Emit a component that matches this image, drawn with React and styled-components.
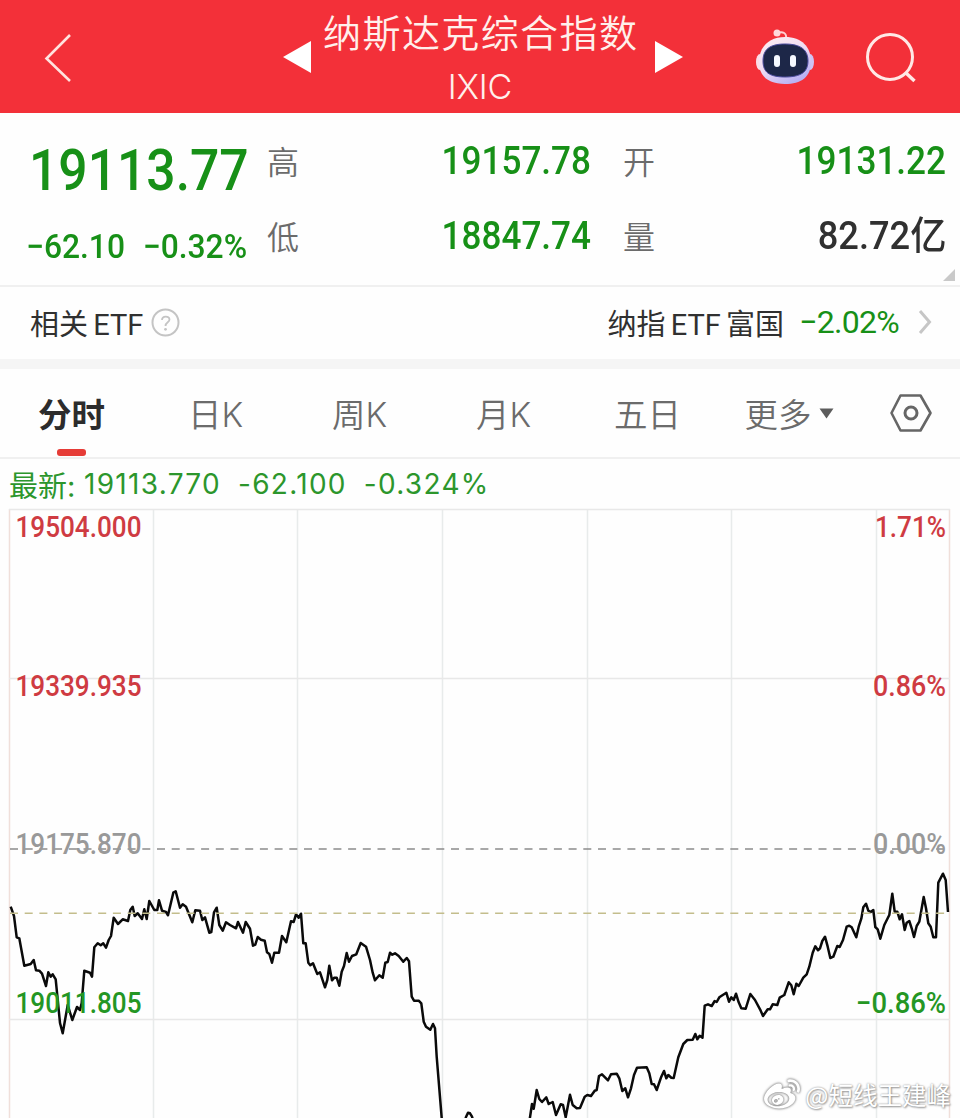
import React from 'react';
import styled, { createGlobalStyle } from 'styled-components';
import { FaWeibo } from 'react-icons/fa';

const GREEN = '#179017';
const RED = '#cf3b42';

const GlobalStyle = createGlobalStyle`
  * {
    box-sizing: border-box;
  }

  body {
    margin: 0;
    background: #fefefe;
    font-family: Roboto, 'Noto Sans CJK SC', sans-serif;
    overflow: hidden;
  }
`;

const Page = styled.div`
  position: relative;
  width: 960px;
  height: 1118px;
  overflow: hidden;
  background: #fefefe;
`;

const Header = styled.header`
  display: flex;
  align-items: center;
  height: 113px;
  padding: 0 42px 0 42px;
  background: #f33039;
  color: #fff0ec;

  svg {
    display: block;
    flex: none;
  }
`;

const BackIcon = styled.svg`
  margin-top: 3px;
`;

const Switcher = styled.div`
  display: flex;
  align-items: center;
  justify-content: space-between;
  width: 400px;
  margin-left: 209px;
`;

const Title = styled.div`
  height: 113px;
  padding-right: 6px;
  text-align: center;
  white-space: nowrap;
`;

const IndexName = styled.div`
  height: 66px;
  font-family: 'Noto Sans CJK SC', sans-serif;
  font-weight: 350;
  font-size: 38px;
  line-height: 62px;
  letter-spacing: 1.4px;
  margin-right: -1.4px;
`;

const IndexCode = styled.div`
  font-family: Inter, sans-serif;
  font-weight: 300;
  font-size: 34px;
  line-height: 42px;
  letter-spacing: -0.2px;
`;

const HeaderIcons = styled.div`
  display: flex;
  align-items: center;
  gap: 50px;
  margin-left: 72px;
`;

const Quote = styled.section`
  position: relative;
  display: flex;
  height: 174px;
  border-bottom: 2px solid #f0f0f0;
`;

const Current = styled.div`
  width: 267px;
  padding: 22px 0 0 29px;
  color: ${GREEN};
  white-space: nowrap;
`;

const Price = styled.div`
  font-weight: 500;
  font-size: 58px;
  line-height: 70px;
  transform: scaleX(0.89);
  transform-origin: left;
`;

const Change = styled.div`
  display: flex;
  gap: 19px;
  margin-top: 21px;
  margin-left: -3px;
  font-weight: 500;
  font-size: 34px;
  line-height: 40px;
  transform: scaleX(0.935);
  transform-origin: left;
`;

const Stats = styled.div`
  display: grid;
  grid-template-columns: 324px 323px;
  grid-template-rows: 75px 75px;
  column-gap: 32px;
  padding-top: 11px;
`;

const Stat = styled.div`
  display: flex;
  align-items: center;
  justify-content: space-between;
`;

const StatLabel = styled.span`
  margin-bottom: 4px;
  color: #6b6b6b;
  font-family: 'Noto Sans CJK SC', sans-serif;
  font-weight: 350;
  font-size: 32px;
  line-height: 40px;
`;

const StatValue = styled.span`
  margin-bottom: 1px;
  color: ${({ $dark }) => ($dark ? '#303030' : GREEN)};
  font-weight: 500;
  font-size: 39px;
  line-height: 44px;
  transform: scaleX(${({ $dark }) => ($dark ? 0.93 : 0.9)});
  transform-origin: right;
`;

const Corner = styled.i`
  position: absolute;
  right: 5px;
  bottom: 4px;
  border-left: 12px solid transparent;
  border-bottom: 12px solid #c9c9c9;
`;

const EtfRow = styled.section`
  display: flex;
  align-items: center;
  height: 82px;
  padding: 0 28px 2px 30px;
  border-bottom: 10px solid #f5f5f5;
  color: #303030;
  font-size: 29px;
  white-space: nowrap;
`;

const EtfText = styled.span`
  margin-left: ${({ $push }) => ($push ? 'auto' : 0)};
  margin-right: ${({ $push }) => ($push ? '15px' : '8px')};
  word-spacing: -2px;
`;

const EtfChange = styled.span`
  margin-right: 19px;
  color: ${GREEN};
  font-size: 32px;
  letter-spacing: -0.7px;
`;

const Tabs = styled.nav`
  display: grid;
  grid-template-columns: repeat(6, 144px) 96px;
  height: 90px;
  border-bottom: 2px solid #f0f0f0;
`;

const Tab = styled.div`
  position: relative;
  display: flex;
  align-items: center;
  justify-content: center;
  gap: 7px;
  padding-right: ${({ $shift }) => $shift || 1}px;
  color: ${({ $active }) => ($active ? '#2c2c2c' : '#6b6b6b')};
  font-family: Inter, 'Noto Sans CJK SC', sans-serif;
  font-weight: ${({ $active }) => ($active ? 700 : 350)};
  font-size: 33.5px;
  line-height: 84px;

  &::after {
    content: '';
    position: absolute;
    left: 57px;
    bottom: 1px;
    width: 29px;
    height: 7px;
    border-radius: 3px;
    background: ${({ $active }) => ($active ? '#e63c37' : 'transparent')};
  }
`;

const TabName = styled.span`
  padding-top: 4px;
`;

const Latest = styled.div`
  display: flex;
  align-items: center;
  height: 49px;
  padding: 1px 0 0 9px;
  color: #2c962c;
  font-family: Inter, 'Noto Sans CJK SC', sans-serif;
  font-size: 28px;
  white-space: pre;
`;

const LatestLabel = styled.span`
  width: 75px;
  font-size: 29px;
`;

const LatestValue = styled.span`
  margin-right: 17px;
  letter-spacing: 1.3px;
`;

const Chart = styled.svg`
  display: block;
  width: 960px;
  height: 610px;
`;

const Watermark = styled.div`
  position: absolute;
  right: 9px;
  bottom: 5px;
  display: flex;
  align-items: center;
  gap: 5px;
  color: #fff;
  font-family: 'Noto Sans CJK SC', sans-serif;
  font-size: 24.5px;
  line-height: 34px;
  text-shadow: 0 0 2px #8a8a8a, 1px 1px 2px #999;

  svg {
    filter: drop-shadow(0 0 1px #888) drop-shadow(0 0 1px #aaa);
  }
`;

const stats = [
  { label: '高', value: '19157.78' },
  { label: '开', value: '19131.22' },
  { label: '低', value: '18847.74' },
  { label: '量', value: '82.72亿', dark: true },
];

const tabs = ['分时', '日K', '周K', '月K', '五日'];

const gridX = [9.5, 153.5, 297.5, 442.5, 587.5, 731.5, 876.5, 949.5];
const gridY = [509.5, 678.5, 1019.5];

const axis = [
  { y: 537, price: '19504.000', pct: '1.71%', w: 71, color: RED },
  { y: 695.5, price: '19339.935', pct: '0.86%', w: 73, color: RED },
  { y: 854, price: '19175.870', pct: '0.00%', w: 73, color: '#999' },
  { y: 1012.5, price: '19011.805', pct: '−0.86%', w: 90, color: '#249624' },
];

const line = `
  10.7,906.7 14,916 16.7,937.3 19.3,938.3 24.3,965.7 30.7,964 33.7,960 36,970.3 39.3,970.7 42,973.7
  46,986 48.3,972.3 50.7,976.7 52.7,974.3 55.7,979.3 60,1023 62.7,1033.3 67.7,1005 72.3,1020 77,1007
  80,1010 81.7,1003 84.3,970.7 90,972.7 92,976.7 94.3,947.3 97.7,943.3 100.7,945.3 103.3,943.3 106,947.7
  108.7,940 111,936 113.7,917.7 118,924 122.7,919.3 128,921 130.3,910 132.7,906.7 134.7,916 137.7,913.3
  142,919 144.3,909.3 146.7,919 149.3,901 154.3,910 157.3,910 159,900.3 162,910.7 166,912 168,915.3
  173.3,892.7 175.7,891.3 180,907.7 182.7,904.3 186,906.7 192.3,922.3 195.3,910.3 200,910.7 202.3,920
  205,917.3 209.3,932.7 211.3,932 214,912.3 216.7,907.7 219.3,925 222.7,930.7 226,922.3 230,925
  236,928.3 238,922 243,932.7 245.7,922 250,928.7 253,945.7 255.3,944.7 257.7,937 261,939.7 264.7,940.7
  267,952.3 269.3,954 272,962.7 274.3,952.7 279,952.7 282,936 286.3,942.3 291,921.3 293.7,922 296,914.3
  298.7,917.7 301,913.7 303.3,943.3 305.7,943.3 308.3,962.7 310.3,965.3 313,963.3 317.3,974 320,972.3
  325,987.3 327.3,980 329.3,965.7 332,980.3 334.3,977.7 336.7,977.7 339.3,985.7 341.7,971.7 344,966
  346.7,953 349,961.7 352,956 356.3,954.3 360.7,943 366,946.7 370,960 372.7,972.7 375,980.3 379.3,975.3
  382.7,977.7 385.3,962.7 387.7,962 390,952.7 392.3,954.7 395,953.3 398.7,956 403.3,961.7 406.7,958
  409,961.3 411.7,996.7 414,1000.7 418.7,1000.7 421.3,1003.3 423.7,1021.7 426,1026.7 430.3,1029.7
  433,1024 435,1028.3 436.7,1056.7 441.7,1118 444,1145 462,1130 466,1117 468,1112.7 470,1113.3
  472,1116.7 476,1130 528,1130 530,1117.3 532,1104 533.7,1108.7 536.7,1090 539.3,1099 542,1102
  546.3,1097.3 548.7,1104 552.7,1102 556,1115 560.7,1104.3 563,1105 565.7,1117.3 570,1094.7 572.7,1105
  576.7,1108.3 580,1108 584.7,1096.7 587.3,1095 591,1096 594.7,1090.7 596.7,1090 599,1076 602,1074.3
  608,1080.3 611,1074.3 616.7,1073.7 619.3,1078.3 622.3,1091 625.3,1088.3 628,1097.3 631,1088.3
  634,1075 637,1067.7 646.7,1067.3 649.3,1073.3 651.7,1084 654,1084.3 656.7,1090 661.3,1076.7 664,1071
  666.3,1078.3 668.3,1075 671.3,1077.7 673.7,1078 678.3,1057.3 683.3,1044 687.3,1040 692.7,1039.7
  695.3,1034 697.3,1039.3 699.7,1035.7 702.5,1037.7 704.7,1005.7 708,1004.3 711.7,1006 714.7,1001
  716.7,1002 719.3,997.3 726.3,992.7 729,1001.7 731.3,997.3 733.7,1000 736,993.7 738.7,1002.3
  741.3,1008.3 745.7,1008.7 750.3,994 755,1000 760.7,1010.7 763,1016 767.7,1009.3 770,1009.3
  772.7,1004.3 777.3,1005 779.7,997.7 784.3,995 788.7,982.3 791.3,985.3 793.7,994.3 796.3,983.7
  798.7,986 803.3,977.7 806.7,974.3 809.3,966.7 812.7,952.7 815.3,946.3 818,950.3 820,948.3 822.3,941
  825,936.7 827.7,946.7 830.3,958 833.3,956.7 837.3,946 839.7,947 843,940 846.7,926.7 849.3,925.7
  851.7,927.3 856.3,937.3 858.7,926.7 861.3,918.7 863.3,907.3 866,903.7 868.3,910.7 870.7,912
  873.3,910 875.3,927 877.7,929.3 880.3,938.7 884.3,925 889.3,915 892.3,893.7 894.7,911.7 897.3,911.7
  899.7,919.3 902,914.3 904.7,930 906.7,922.7 909.3,921 911.7,928.3 914,937 916.7,926 919.3,921.7
  923.7,897 926,908.3 928.3,923.3 930.7,926.7 933.3,937.3 936,937.3 938.3,882.7 943,873.7 945.7,880
  948,912
`;

const Robot = () => (
  <svg width="60" height="57" viewBox="0 0 60 57">
    <defs>
      <linearGradient id="shell" x1="0" y1="0" x2="0.6" y2="1">
        <stop offset="0" stopColor="#fff0f2" />
        <stop offset="0.55" stopColor="#f0dcf2" />
        <stop offset="1" stopColor="#b9b2f4" />
      </linearGradient>
    </defs>
    <path d="M22 5C28 3 32 5 31 11" fill="none" stroke="#ffd0d3" strokeWidth="2" />
    <circle cx="22" cy="5" r="3.500" fill="#ffd9dc" />
    <ellipse cx="5" cy="34" rx="4" ry="8" fill="#fbdde6" />
    <ellipse cx="55" cy="34" rx="4" ry="8" fill="#cfc2f3" />
    <path d="M30 9C47 9 56 19 56 34C56 49 46 56 30 56C14 56 4 49 4 34C4 19 14 9 30 9Z" fill="url(#shell)" />
    <path d="M30 16C46 16 53 22 53 33C53 44 46 49 30 49C14 49 8 44 8 33C8 22 14 16 30 16Z" fill="#1d2748" stroke="#4a4a9c" strokeWidth="1" />
    <rect x="19" y="27" width="6" height="12" rx="3" fill="#f5f8ff" />
    <rect x="35" y="27" width="6" height="12" rx="3" fill="#f5f8ff" />
  </svg>
);

const App = () => {
  return (
    <Page>
      <GlobalStyle />
      <Header>
        <BackIcon width="32" height="52" viewBox="0 0 32 52">
          <path d="M28 3L4.500 26.500L28 49" fill="none" stroke="#ffe3df" strokeWidth="2.600" />
        </BackIcon>
        <Switcher>
          <svg width="28" height="32" viewBox="0 0 28 32">
            <path d="M0 16L28 0V32Z" fill="#fff" />
          </svg>
          <Title>
            <IndexName>纳斯达克综合指数</IndexName>
            <IndexCode>IXIC</IndexCode>
          </Title>
          <svg width="28" height="32" viewBox="0 0 28 32">
            <path d="M28 16L0 0V32Z" fill="#fff" />
          </svg>
        </Switcher>
        <HeaderIcons>
          <Robot />
          <svg width="52" height="52" viewBox="0 0 52 52">
            <circle cx="25" cy="26" r="22.500" fill="none" stroke="#ffe9e6" strokeWidth="3" />
            <path d="M41 42L49.500 50" stroke="#ffe9e6" strokeWidth="3.500" />
          </svg>
        </HeaderIcons>
      </Header>

      <Quote>
        <Current>
          <Price>19113.77</Price>
          <Change>
            <span>−62.10</span>
            <span>−0.32%</span>
          </Change>
        </Current>
        <Stats>
          {stats.map((s) => (
            <Stat key={s.label}>
              <StatLabel>{s.label}</StatLabel>
              <StatValue $dark={s.dark}>{s.value}</StatValue>
            </Stat>
          ))}
        </Stats>
        <Corner />
      </Quote>

      <EtfRow>
        <EtfText>相关 ETF</EtfText>
        <svg width="29" height="29" viewBox="0 0 29 29">
          <circle cx="14.500" cy="14.500" r="13" fill="none" stroke="#c4c4c4" strokeWidth="2" />
          <path d="M11 12C11 7.500 18.500 7.500 18.500 11.500C18.500 14.500 14.500 14 14.500 18" fill="none" stroke="#c4c4c4" strokeWidth="1.800" />
          <circle cx="14.500" cy="21.300" r="1.400" fill="#c4c4c4" />
        </svg>
        <EtfText $push>纳指 ETF 富国</EtfText>
        <EtfChange>−2.02%</EtfChange>
        <svg width="14" height="26" viewBox="0 0 14 26">
          <path d="M2 2L11.500 13L2 24" fill="none" stroke="#c6c6c6" strokeWidth="3" />
        </svg>
      </EtfRow>

      <Tabs>
        {tabs.map((name, i) => (
          <Tab key={name} $active={i === 0}>
            <TabName>{name}</TabName>
          </Tab>
        ))}
        <Tab $shift={6}>
          <TabName>更多</TabName>
          <svg width="15" height="11" viewBox="0 0 15 11">
            <path d="M0.500 0.500H14.500L7.500 10.500Z" fill="#5c5c5c" />
          </svg>
        </Tab>
        <Tab $shift={3}>
          <svg width="44" height="40" viewBox="0 0 44 40">
            <path d="M11.500 2.500H31.500L41.500 20L31.500 37.500H11.500L2.500 20Z" fill="none" stroke="#666" strokeWidth="2.600" strokeLinejoin="round" />
            <circle cx="22" cy="20" r="6" fill="none" stroke="#666" strokeWidth="3" />
          </svg>
        </Tab>
      </Tabs>

      <Latest>
        <LatestLabel>最新:</LatestLabel>
        <LatestValue>19113.770</LatestValue>
        <LatestValue>-62.100</LatestValue>
        <LatestValue>-0.324%</LatestValue>
      </Latest>

      <Chart viewBox="0 508 960 610">
        <g stroke="#e8e8e8" strokeWidth="1.500">
          {gridX.map((x) => (
            <path key={x} d={`M${x} 509V1118`} stroke={x < 10 || x > 940 ? '#f0dfda' : '#e8ebeb'} />
          ))}
          {gridY.map((y) => (
            <path key={y} d={`M9 ${y}H950`} />
          ))}
        </g>
        <path d="M10 849H949" stroke="#8c8c8c" strokeWidth="1.500" strokeDasharray="8 6.700" />
        <polyline points={line} fill="none" stroke="#0a0a0a" strokeWidth="2.500" strokeLinejoin="round" />
        <path d="M10 913.300H949" stroke="#c3bd8c" strokeWidth="1.500" strokeDasharray="8 6.700" />
        <g fontSize="29" fontWeight="500">
          {axis.map((a) => (
            <g key={a.price} fill={a.color}>
              <text x="15.500" y={a.y} textLength="126" lengthAdjust="spacingAndGlyphs">
                {a.price}
              </text>
              <text x={946 - a.w} y={a.y} textLength={a.w} lengthAdjust="spacingAndGlyphs">
                {a.pct}
              </text>
            </g>
          ))}
        </g>
      </Chart>

      <Watermark>
        <FaWeibo size={36} />
        @短线王建峰
      </Watermark>
    </Page>
  );
};

export default App;
